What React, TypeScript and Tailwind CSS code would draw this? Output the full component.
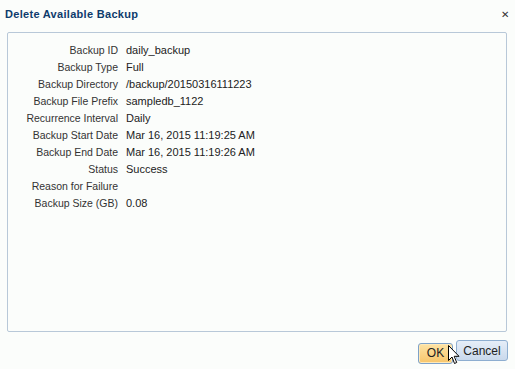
import React from 'react';

const rows = [
  { label: 'Backup ID', value: 'daily_backup' },
  { label: 'Backup Type', value: 'Full' },
  { label: 'Backup Directory', value: '/backup/20150316111223' },
  { label: 'Backup File Prefix', value: 'sampledb_1122' },
  { label: 'Recurrence Interval', value: 'Daily' },
  { label: 'Backup Start Date', value: 'Mar 16, 2015 11:19:25 AM' },
  { label: 'Backup End Date', value: 'Mar 16, 2015 11:19:26 AM' },
  { label: 'Status', value: 'Success' },
  { label: 'Reason for Failure', value: '' },
  { label: 'Backup Size (GB)', value: '0.08' },
];

function Cursor() {
  return (
    <svg className="absolute left-[30px] top-[5px]" width="12" height="20" viewBox="0 0 12 20">
      <path d="M0.5 0.5 L0.5 15.5 L4 12 L6.5 18.5 L8.7 17.5 L6.2 11.3 L11 11.3 Z" fill="#fff" stroke="#000" strokeWidth="1" />
    </svg>
  );
}

export default function App() {
  return (
    <div className="w-[515px] h-[369px] bg-[#fbfdfb] flex flex-col font-['Liberation_Sans',Arial,sans-serif] text-[#333] overflow-hidden">
      <div className="h-[32px] flex items-center justify-between pl-[5px] pr-[6px] pb-[3px]">
        <h1 className="text-[11px] font-bold text-[#0e3b6c] tracking-[0.3px]">Delete Available Backup</h1>
        <span className="text-[10px] text-[#333] leading-none">✕</span>
      </div>
      <div className="mx-[7px] w-[500px] h-[300px] border border-[#b8c8d8] rounded-[2px] pt-[9px]">
        <div className="grid grid-cols-[110px_1fr] gap-x-[8px]">
          {rows.map((r) => (
            <React.Fragment key={r.label}>
              <div className="text-right text-[10.5px] leading-[17px] text-[#333] whitespace-nowrap">{r.label}</div>
              <div className="text-[11px] leading-[17px] text-[#222] whitespace-nowrap">{r.value}</div>
            </React.Fragment>
          ))}
        </div>
      </div>
      <div className="flex justify-end gap-[3px] pr-[7px] pt-[8px]">
        <div className="relative">
          <button className="w-[35px] h-[21px] rounded-[3px] border border-[#7ea2c8] bg-gradient-to-b from-[#fde3a4] to-[#f8c66a] text-[12px] text-[#222] shadow-[inset_0_0_0_1px_#ffe9b8]">
            OK
          </button>
          <Cursor />
        </div>
        <button className="w-[52px] h-[21px] rounded-[3px] border border-[#8eaed0] bg-gradient-to-b from-[#e6eef8] to-[#c9d9ec] text-[12px] text-[#222]">
          Cancel
        </button>
      </div>
    </div>
  );
}
